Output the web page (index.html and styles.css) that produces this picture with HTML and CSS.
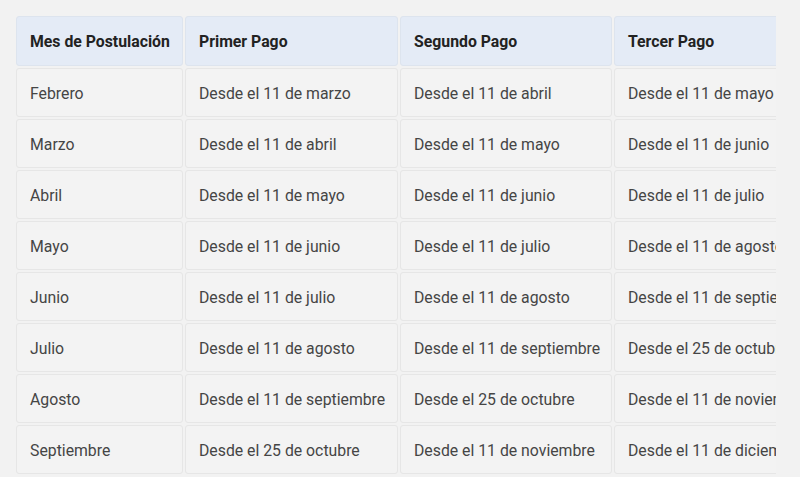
FILE: index.html
```html
<!DOCTYPE html>
<html lang="es">
<head>
<meta charset="utf-8">
<link rel="stylesheet" href="styles.css">
</head>
<body>
<div class="wrap">
<table class="pagos">
<thead>
<tr><th class="c1">Mes de Postulación</th><th class="c2">Primer Pago</th><th class="c3">Segundo Pago</th><th class="c4">Tercer Pago</th></tr>
</thead>
<tbody>
<tr><td>Febrero</td><td>Desde el 11 de marzo</td><td>Desde el 11 de abril</td><td>Desde el 11 de mayo</td></tr>
<tr><td>Marzo</td><td>Desde el 11 de abril</td><td>Desde el 11 de mayo</td><td>Desde el 11 de junio</td></tr>
<tr><td>Abril</td><td>Desde el 11 de mayo</td><td>Desde el 11 de junio</td><td>Desde el 11 de julio</td></tr>
<tr><td>Mayo</td><td>Desde el 11 de junio</td><td>Desde el 11 de julio</td><td>Desde el 11 de agosto</td></tr>
<tr><td>Junio</td><td>Desde el 11 de julio</td><td>Desde el 11 de agosto</td><td>Desde el 11 de septiembre</td></tr>
<tr><td>Julio</td><td>Desde el 11 de agosto</td><td>Desde el 11 de septiembre</td><td>Desde el 25 de octubre</td></tr>
<tr><td>Agosto</td><td>Desde el 11 de septiembre</td><td>Desde el 25 de octubre</td><td>Desde el 11 de noviembre</td></tr>
<tr><td>Septiembre</td><td>Desde el 25 de octubre</td><td>Desde el 11 de noviembre</td><td>Desde el 11 de diciembre</td></tr>
</tbody>
</table>
</div>
</body>
</html>
```
FILE: styles.css
```css
html, body {
  margin: 0;
  padding: 0;
  background: #f2f2f2;
}
body {
  font-family: Roboto, "Liberation Sans", sans-serif;
  padding: 14px 0 0 14px;
}
.wrap {
  width: 762px;
  overflow: hidden;
}
.pagos {
  border-collapse: separate;
  border-spacing: 2px;
  table-layout: fixed;
  width: 830px;
  font-size: 15.8px;
}
.pagos th, .pagos td {
  text-align: left;
  padding: 1px 13px 0;
  white-space: nowrap;
  overflow: hidden;
  border: 1px solid #e6e6e6;
  border-radius: 3px;
}
.pagos th {
  background: #e4ebf6;
  color: #222;
  font-weight: 700;
  height: 47px;
  border-color: #dde4ee;
}
.pagos td {
  background: #f3f3f3;
  color: #454545;
  height: 46px;
}
.c1 { width: 139px; }
.c2 { width: 185px; }
.c3 { width: 184px; }
.c4 { width: 210px; }
```
